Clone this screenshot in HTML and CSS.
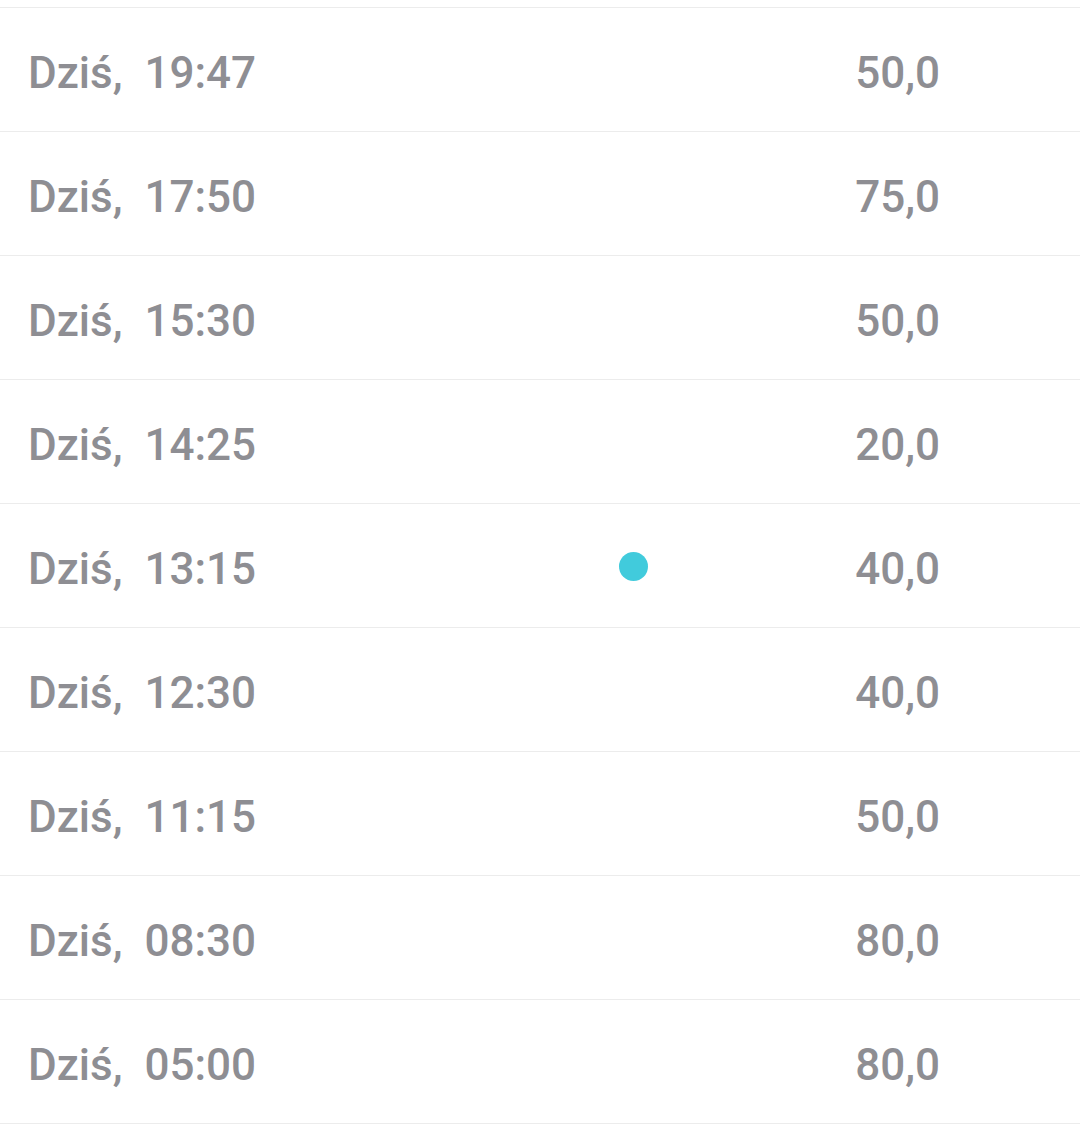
FILE: index.html
```html
<!DOCTYPE html>
<html lang="pl">
<head>
    <meta charset="UTF-8">
    <meta name="viewport" content="width=device-width, initial-scale=1.0">
    <title>Historia</title>
    <link rel="stylesheet" href="styles.css">
</head>
<body>

    <!-- Readings list -->
    <ul class="history">
        <li class="row"><span class="time">Dziś,  19:47</span><span class="value">50,0</span></li>
        <li class="row"><span class="time">Dziś,  17:50</span><span class="value">75,0</span></li>
        <li class="row"><span class="time">Dziś,  15:30</span><span class="value">50,0</span></li>
        <li class="row"><span class="time">Dziś,  14:25</span><span class="value">20,0</span></li>
        <li class="row"><span class="time">Dziś,  13:15</span><span class="value">40,0</span><span class="dot"></span></li>
        <li class="row"><span class="time">Dziś,  12:30</span><span class="value">40,0</span></li>
        <li class="row"><span class="time">Dziś,  11:15</span><span class="value">50,0</span></li>
        <li class="row"><span class="time">Dziś,  08:30</span><span class="value">80,0</span></li>
        <li class="row"><span class="time">Dziś,  05:00</span><span class="value">80,0</span></li>
    </ul>

</body>
</html>
```

FILE: styles.css
```css
/* Reset */
* {
    margin: 0;
    padding: 0;
    box-sizing: border-box;
}

body {
    font-family: Roboto, "Noto Sans", sans-serif;
    background-color: #fff;
    overflow: hidden;
}

/* List */
.history {
    list-style: none;
    margin-top: 7px;
    border-top: 1px solid #ececec;
}

.row {
    position: relative;
    display: flex;
    justify-content: space-between;
    align-items: center;
    height: 124px;
    padding: 7px 140px 0 28px;
    line-height: 116px;
    border-bottom: 1px solid #ececec;
    font-size: 44px;
    font-weight: 500;
    color: #8e8e93;
}

.time {
    white-space: pre;
}

/* Selected point marker */
.dot {
    position: absolute;
    left: 619px;
    top: 48px;
    width: 29px;
    height: 29px;
    border-radius: 50%;
    background-color: #41cbdc;
}
```
